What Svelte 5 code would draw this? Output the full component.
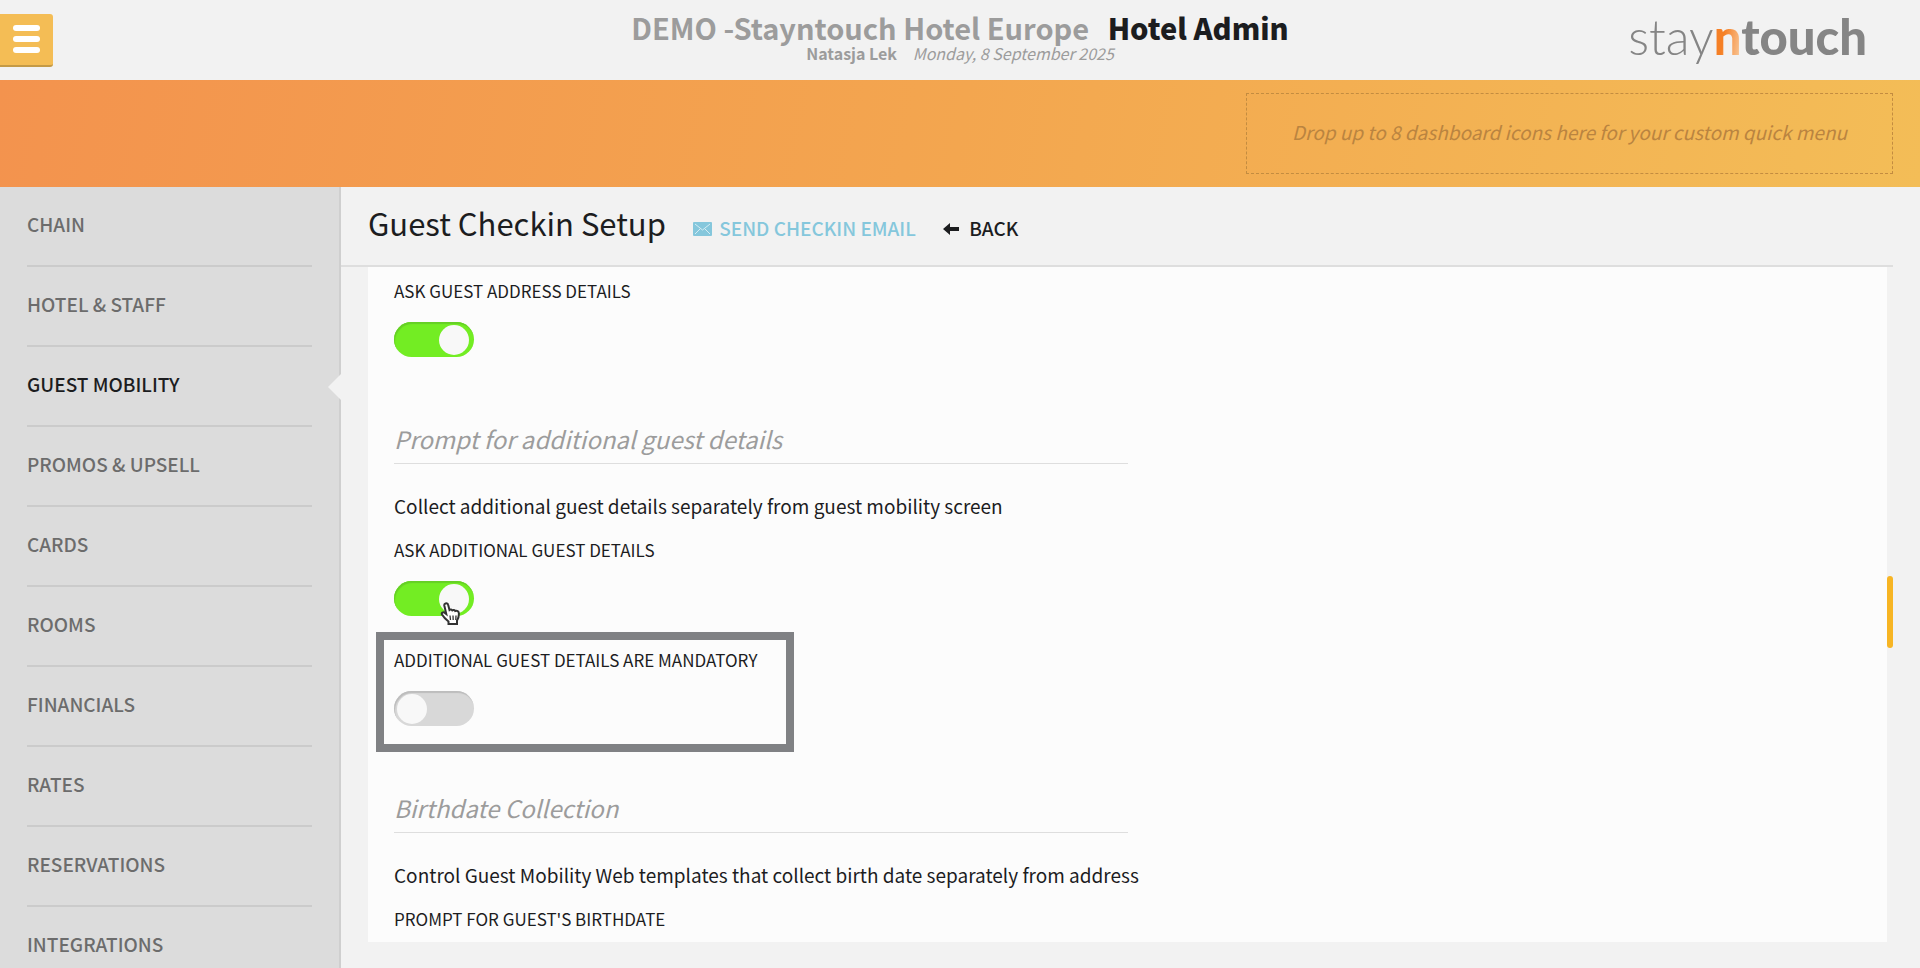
<script>
  let navItems = $state([
    'Chain',
    'Hotel & Staff',
    'Guest Mobility',
    'Promos & Upsell',
    'Cards',
    'Rooms',
    'Financials',
    'Rates',
    'Reservations',
    'Integrations'
  ]);
  let active = $state('Guest Mobility');

  let askAddress = $state(true);
  let askAdditional = $state(true);
  let additionalMandatory = $state(false);
</script>

{#snippet hand()}
  <svg class="cursor" viewBox="0 0 22 24" aria-hidden="true">
    <path
      d="M5.5 1.5c1.500-.6 2.400.2 2.700 1.500l1.300 5c1-.8 2.200-.5 2.800.4 1-.7 2.300-.4 2.900.6 1.800-.7 3.600.2 3.700 2.500.1 3-.4 4.500-1.900 7v3.500H8.500v-2.500C6 17.500 3.500 15 2 12.500c-.8-1.500 1-2.800 2.500-1.800l1.800 1.300L4.300 3.500c-.2-1 .2-1.700 1.200-2z"
      fill="#fff"
      stroke="#333"
      stroke-width="2"
    />
    <path d="M10 13.500l.5 4.500M13 13.500l.2 4.500M16 13.500l-.2 4.500" stroke="#333" stroke-width="1.300" />
  </svg>
{/snippet}

<div class="page">
  <header class="top">
    <button class="menu" aria-label="Menu">
      <span></span>
      <span></span>
      <span></span>
    </button>
    <div class="hotel">
      <h1><span>DEMO -Stayntouch Hotel Europe</span> <strong>Hotel Admin</strong></h1>
      <p><b>Natasja Lek</b> <em>Monday, 8 September 2025</em></p>
    </div>
    <a class="logo" href="#home"><span class="light">stay</span><span class="n">n</span><span class="heavy">touch</span></a>
  </header>

  <section class="quick">
    <div class="drop">Drop up to 8 dashboard icons here for your custom quick menu</div>
  </section>

  <div class="main">
    <nav>
      {#each navItems as item}
        <a href="#{item}" class:active={item === active} onclick={() => (active = item)}>{item}</a>
      {/each}
    </nav>

    <main>
      <div class="title">
        <h2>Guest Checkin Setup</h2>
        <button class="action blue">
          <svg width="19" height="14" viewBox="0 0 19 14" aria-hidden="true">
            <rect width="19" height="14" rx="1" fill="#85c7dc" />
            <path d="M2 2l7.500 6L17 2M2 12l5-5M17 12l-5-5" fill="none" stroke="#d5edf4" />
          </svg>
          Send Checkin Email
        </button>
        <button class="action back">
          <svg width="16" height="12" viewBox="0 0 16 12" aria-hidden="true">
            <path d="M0 6L7 0v4h9v4H7v4z" fill="#1c1d1f" />
          </svg>
          Back
        </button>
      </div>

      <div class="body">
        <form class="panel">
          <div class="field">
            <label for="address">Ask guest address details</label>
            <input id="address" type="checkbox" bind:checked={askAddress} />
          </div>

          <h3>Prompt for additional guest details</h3>
          <p>Collect additional guest details separately from guest mobility screen</p>
          <div class="field">
            <label for="additional">Ask additional guest details</label>
            <div class="switch">
              <input id="additional" type="checkbox" bind:checked={askAdditional} />
              {@render hand()}
            </div>
          </div>
          <div class="field marked">
            <label for="mandatory">Additional guest details are mandatory</label>
            <input id="mandatory" type="checkbox" bind:checked={additionalMandatory} />
          </div>

          <h3>Birthdate Collection</h3>
          <p>Control Guest Mobility Web templates that collect birth date separately from address</p>
          <div class="field">
            <label for="birthdate">Prompt for guest's birthdate</label>
            <input id="birthdate" type="checkbox" />
          </div>
        </form>
        <div class="scroll"></div>
      </div>
    </main>
  </div>
</div>

<style>
  :global(body) {
    background: #f2f2f2;
    color: #1c1d1f;
    font-family: 'Noto Sans CJK SC', 'Noto Sans', sans-serif;
  }
  .page {
    display: flex;
    flex-direction: column;
    height: 100vh;
    overflow: hidden;
  }
  h1, h2, h3, p {
    margin: 0;
    font-weight: 400;
  }
  button {
    padding: 0;
    border: 0;
    background: none;
    color: inherit;
    font-family: inherit;
    cursor: pointer;
  }
  a {
    text-decoration: none;
  }

  /* top bar */
  .top {
    display: grid;
    grid-template-columns: 1fr auto 1fr;
    align-items: center;
    flex: none;
    height: 80px;
  }
  .menu {
    display: flex;
    flex-direction: column;
    align-items: center;
    justify-content: center;
    gap: 5px;
    width: 53px;
    height: 53px;
    border-bottom: 2px solid #c49a46;
    border-radius: 0 3px 3px 0;
    background: #f4bd55;
  }
  .menu span {
    width: 27px;
    height: 6px;
    border-radius: 3px;
    background: #fff;
  }
  .hotel {
    padding-bottom: 6px;
    color: #9c9c9c;
    text-align: center;
  }
  h1 {
    font-size: 29px;
    line-height: 32px;
    font-weight: 700;
  }
  h1 strong {
    margin-left: 12px;
    color: #1c1d1f;
  }
  .hotel p {
    font-size: 16px;
    line-height: 20px;
  }
  .hotel em {
    margin-left: 12px;
  }
  .logo {
    justify-self: end;
    padding: 0 53px 8px 0;
    color: #858585;
    font-family: Lato, sans-serif;
    font-size: 49px;
    line-height: 56px;
  }
  .light {
    font-weight: 300;
  }
  .n,
  .heavy {
    font-weight: 900;
  }
  .n {
    background: linear-gradient(100deg, #f58026 40%, #f9cfa5);
    background-clip: text;
    color: transparent;
  }

  /* quick menu */
  .quick {
    display: flex;
    justify-content: flex-end;
    flex: none;
    box-sizing: border-box;
    height: 107px;
    padding: 13px 27px;
    background: linear-gradient(100deg, #f3934e, #f3a64f 50%, #f3bd57);
  }
  .drop {
    display: flex;
    align-items: center;
    justify-content: center;
    box-sizing: border-box;
    width: 647px;
    padding-bottom: 4px;
    border: 1px dashed #c38c40;
    color: #ba8440;
    font-size: 19px;
    font-style: italic;
  }

  .main {
    display: flex;
    flex: 1;
    min-height: 0;
  }
  nav {
    flex: none;
    box-sizing: border-box;
    width: 341px;
    padding: 0 27px;
    border-right: 2px solid #cfcfcf;
    background: #dcdcdc;
  }
  nav a {
    display: block;
    position: relative;
    box-sizing: border-box;
    height: 80px;
    border-bottom: 2px solid #cbcbcb;
    color: #6c6c6c;
    font-size: 19px;
    line-height: 74px;
    font-weight: 500;
    text-transform: uppercase;
  }
  nav a.active {
    color: #1c1d1f;
  }
  nav a.active::after {
    content: '';
    position: absolute;
    top: 27px;
    right: -29px;
    border: 13px solid transparent;
    border-left: 0;
    border-right-color: #f2f2f2;
  }

  main {
    display: flex;
    flex: 1;
    flex-direction: column;
    min-width: 0;
    padding: 0 27px 26px 0;
  }
  .title {
    display: flex;
    align-items: baseline;
    gap: 27px;
    flex: none;
    box-sizing: border-box;
    height: 80px;
    padding: 16px 0 0 27px;
    border-bottom: 2px solid #dedede;
  }
  h2 {
    font-size: 31px;
    line-height: 40px;
  }
  .action {
    font-size: 19px;
    line-height: 28px;
    font-weight: 500;
    text-transform: uppercase;
  }
  .action svg {
    margin-right: 3px;
  }
  .back svg {
    margin-right: 6px;
    vertical-align: 1px;
  }
  .blue {
    color: #85c7dc;
  }

  .body {
    display: flex;
    flex: 1;
    min-height: 0;
    padding-left: 27px;
  }
  .panel {
    flex: 1;
    padding: 12px 26px 0;
    background: #fcfcfc;
    overflow: hidden;
  }
  .scroll {
    flex: none;
    width: 6px;
    height: 72px;
    margin-top: 309px;
    border-radius: 3px;
    background: #f7b524;
  }
  .field {
    position: relative;
    height: 110px;
  }
  .field label {
    display: block;
    margin-bottom: 19px;
    font-size: 17px;
    line-height: 24px;
    text-transform: uppercase;
  }
  .marked::before {
    content: '';
    position: absolute;
    top: -16px;
    left: -18px;
    box-sizing: border-box;
    width: 418px;
    height: 120px;
    border: 8px solid #808184;
    pointer-events: none;
  }
  h3 {
    box-sizing: border-box;
    width: 734px;
    margin: 30px 0 26px;
    padding-bottom: 4px;
    border-bottom: 1px solid #dedede;
    color: #9c9c9c;
    font-size: 24px;
    font-style: italic;
    line-height: 40px;
  }
  .panel p {
    margin-bottom: 16px;
    font-size: 19px;
    line-height: 32px;
  }

  input {
    display: block;
    appearance: none;
    width: 80px;
    height: 35px;
    margin: 0;
    border-radius: 18px;
    background: #d8d8d8;
    box-shadow: inset 1px 2px 1px #bdbdbd;
    cursor: pointer;
  }
  input::before {
    content: '';
    display: block;
    width: 30px;
    height: 30px;
    margin: 3px;
    border-radius: 50%;
    background: #f8f8f8;
  }
  input:checked {
    background: #73ed23;
    box-shadow: inset 1px 2px 1px #65cf25;
  }
  input:checked::before {
    margin-left: 45px;
  }
  .switch {
    position: relative;
    width: 80px;
  }
  .cursor {
    position: absolute;
    top: 21px;
    left: 46px;
    width: 22px;
    height: 24px;
    pointer-events: none;
  }
</style>
